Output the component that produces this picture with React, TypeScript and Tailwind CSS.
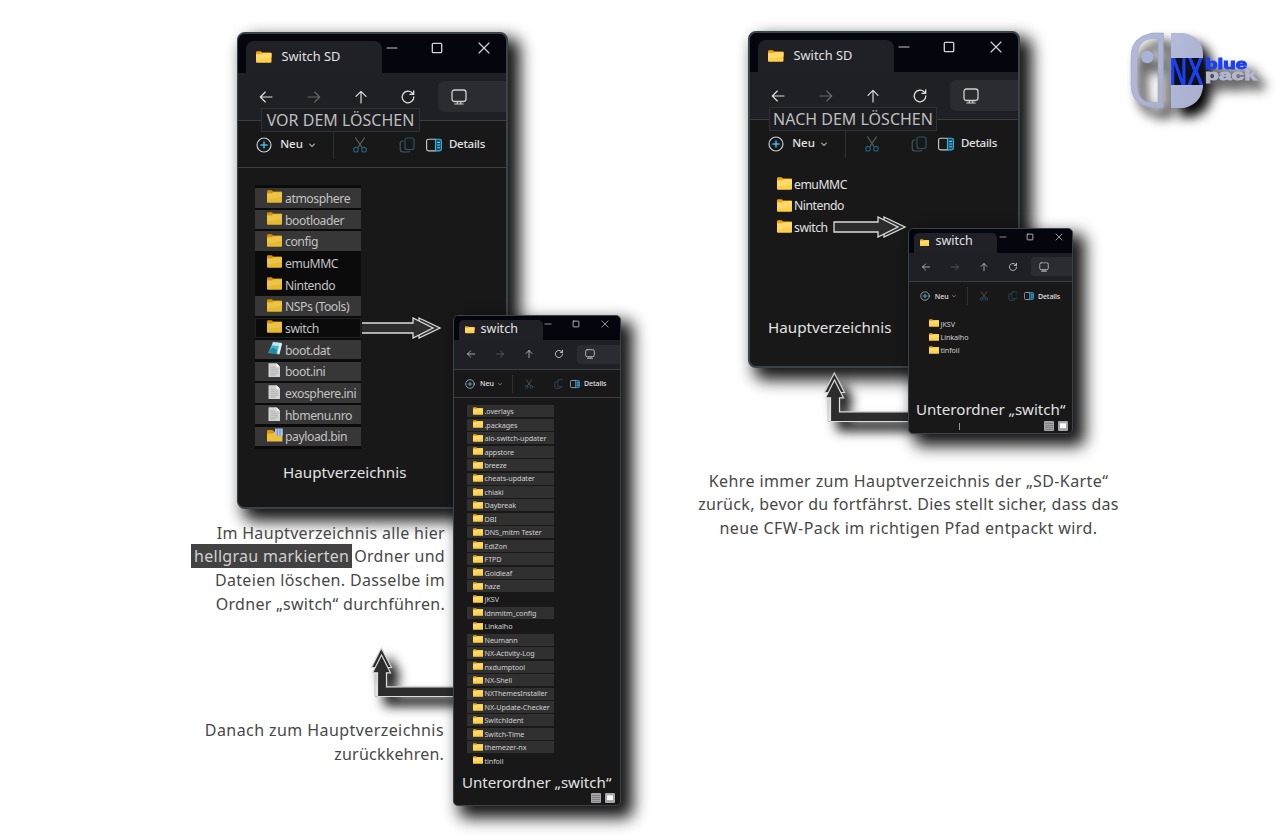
import React from "react";

type Kind = "folder" | "dat" | "doc" | "bin";
type Entry = { name: string; marked?: boolean; kind?: Kind };

const rootEntries: Entry[] = [
  { name: "atmosphere", marked: true },
  { name: "bootloader", marked: true },
  { name: "config", marked: true },
  { name: "emuMMC" },
  { name: "Nintendo" },
  { name: "NSPs (Tools)", marked: true },
  { name: "switch" },
  { name: "boot.dat", marked: true, kind: "dat" },
  { name: "boot.ini", marked: true, kind: "doc" },
  { name: "exosphere.ini", marked: true, kind: "doc" },
  { name: "hbmenu.nro", marked: true, kind: "doc" },
  { name: "payload.bin", marked: true, kind: "bin" },
];

const kept = ["JKSV", "Linkalho", "tinfoil"];
const switchEntries: Entry[] = [
  ".overlays", ".packages", "aio-switch-updater", "appstore", "breeze", "cheats-updater", "chiaki",
  "Daybreak", "DBI", "DNS_mitm Tester", "EdiZon", "FTPD", "Goldleaf", "haze", "JKSV", "ldnmitm_config",
  "Linkalho", "Neumann", "NX-Activity-Log", "nxdumptool", "NX-Shell", "NXThemesInstaller",
  "NX-Update-Checker", "SwitchIdent", "Switch-Time", "themezer-nx", "tinfoil",
].map((name) => ({ name, marked: !kept.includes(name) }));

function Folder({ className, dim }: { className: string; dim?: boolean }) {
  const front = dim ? "#e6b92f" : "#ffcf48";
  const light = dim ? "#eccb5c" : "#ffe08a";
  const back = dim ? "#d98e00" : "#f0a800";
  return (
    <svg viewBox="0 0 16 13" preserveAspectRatio="none" className={className}>
      <path d="M0 1.5Q0 .3 1.2 .3H5L6.4 1.6H15Q16 1.6 16 2.8V6H0Z" fill={back} />
      <path d="M0 3.2H5.2L6.6 2.1H16V12Q16 12.7 15 12.7H1Q0 12.7 0 12Z" fill={front} />
      <path d="M0 3.8H5.4L6.8 2.7H16V7L0 9.5Z" fill={light} opacity=".6" />
    </svg>
  );
}

function FileIcon({ kind }: { kind?: Kind }) {
  if (kind === "dat")
    return (
      <svg viewBox="0 0 16 16" className="mb-[2px] h-4 w-4 shrink-0">
        <path d="M6 1 15 2 12 13 1 12Z" fill="#4fb3c8" />
        <path d="M6 1 15 2 14 5 5 4.5Z" fill="#bfe6ee" />
        <path d="M12.6 2 15 3 12.4 13.5 10 13Z" fill="#e1eef0" />
        <path d="M2.5 9 6.5 6.5 10 9 9.5 12.5 1.5 11.6Z" fill="#1c8ba5" />
      </svg>
    );
  if (kind === "doc")
    return (
      <svg viewBox="0 0 16 16" className="mb-[2px] h-4 w-4 shrink-0">
        <path d="M1.500 1.2H9.500L13 4.700V15H1.500Z" fill="#d2d2d2" />
        <path d="M9.500 1.2V4.700H13Z" fill="#fafafa" />
        <path d="M3.500 5.2H8.500M3.500 7.2H11M3.500 9.2H11M3.500 11.2H11M3.500 13H8.500" stroke="#a2a2a2" strokeWidth=".7" />
      </svg>
    );
  if (kind === "bin")
    return (
      <svg viewBox="0 0 16 16" className="mb-[2px] h-4 w-4 shrink-0">
        <path d="M0 4Q0 3 1 3H5.5L7 4.5H15V8H0Z" fill="#dd9700" />
        <path d="M0 6.5H6L7.5 5.3H15.5V14.5H0Z" fill="#ecc139" />
        <path d="M8 1.5H15.7V8.7H8Z" fill="#a9c8ea" />
        <path d="M10.300 1.5V8.7M13 1.5V8.7" stroke="#7d6fc0" strokeWidth=".8" />
      </svg>
    );
  return <Folder dim className="mb-[2px] h-[13px] w-[15px] shrink-0" />;
}

const icon = "absolute h-[1.6em] w-[1.6em] -translate-x-1/2 -translate-y-1/2 fill-none";

function Glyph({ children, className = "" }: { children: React.ReactNode; className?: string }) {
  return (
    <span className={"relative h-0 w-0 " + className}>
      <svg viewBox="0 0 16 16" className={icon} strokeWidth="1.15" strokeLinecap="round" strokeLinejoin="round">
        {children}
      </svg>
    </span>
  );
}

/* Every measure is in em, so the font size of the frame scales the whole window chrome. */
function Explorer({ className, title, rule, children }: {
  className: string; title: React.ReactNode; rule?: boolean; children?: React.ReactNode;
}) {
  return (
    <section className={"absolute flex flex-col rounded-[.8em] border-[#39444a] bg-[#181818] text-[#e2e2e2] shadow-[9px_9px_16px_3px_rgba(0,0,0,0.92)] " + className}>
      <header className="flex h-[3.9em] shrink-0 rounded-t-[.7em] bg-[#05050d]">
        <div className="ml-[.8em] mt-[.7em] flex w-[13.6em] items-center rounded-t-[.8em] bg-[#202126] pb-[.1em] pl-[1em]">
          <Folder className="h-[1.2em] w-[1.55em] shrink-0" />
          {title}
        </div>
        <div className="flex pt-[1.38em]">
          <Glyph className="ml-[.95em]"><path d="M3 8H13" stroke="#c9c9c9" /></Glyph>
          <Glyph className="ml-[4.5em]"><rect x="3.3" y="3.3" width="9.4" height="9.4" rx="1" stroke="#d5d5d5" strokeWidth="1.3" /></Glyph>
          <Glyph className="ml-[4.7em]"><path d="M3 3 13 13M13 3 3 13" stroke="#d5d5d5" /></Glyph>
        </div>
      </header>
      <nav className="flex h-[4.8em] shrink-0 items-center border-b border-[#3b3d40] bg-[#1f2025]">
        <Glyph className="ml-[2.75em]"><path d="M14 8H2.3M7.3 3 2.3 8 7.3 13" stroke="#dedede" /></Glyph>
        <Glyph className="ml-[4.8em]"><path d="M2 8H13.7M8.7 3 13.7 8 8.7 13" stroke="#65666a" /></Glyph>
        <Glyph className="ml-[4.7em]"><path d="M8 14V2.3M3 7.3 8 2.3 13 7.3" stroke="#dedede" /></Glyph>
        <Glyph className="ml-[4.75em]"><path d="M13.8 8A5.8 5.8 0 1 1 12 3.8L13.5 5.2M13.7 1.8V5.4H10" stroke="#dedede" strokeWidth="1.3" /></Glyph>
        <div className="ml-[3em] flex h-[3.1em] grow items-center rounded-l-[.6em] bg-[#2b2c31]">
          <Glyph className="ml-[2.1em]">
            <rect x="1" y="1" width="14" height="11.5" rx="2.4" stroke="#cfcfcf" strokeWidth="1.3" />
            <path d="M6.3 12.5V14.7M9.7 12.5V14.7M3.8 15H12.2" stroke="#cfcfcf" />
          </Glyph>
        </div>
      </nav>
      <div className={"flex h-[4.7em] shrink-0 items-center border-b pt-[.1em] font-medium " + (rule ? "border-[#3b3d40]" : "border-transparent")}>
        <Glyph className="ml-[2.6em]">
          <circle cx="8" cy="8" r="7" stroke="#c9d0d4" />
          <path d="M8 4.9V11.1M4.9 8H11.1" stroke="#45b5ea" strokeWidth="1.5" />
        </Glyph>
        <div className="ml-[1.62em] w-[2.4em] text-[1em]"><span className="text-[1.15em] leading-none">Neu</span></div>
        <Glyph className="ml-[.82em]"><path d="M5.5 7 8 9.5 10.5 7" stroke="#999" /></Glyph>
        <div className="ml-[2.05em] h-[2.9em] w-px bg-[#2d2f30]" />
        <Glyph className="ml-[2.6em]">
          <path d="M3.5 .8 10.4 11M12.5 .8 5.6 11" stroke="#5e6264" />
          <circle cx="4" cy="12.7" r="2.3" stroke="#235f7c" /><circle cx="12" cy="12.7" r="2.3" stroke="#235f7c" />
        </Glyph>
        <Glyph className="ml-[4.75em]">
          <rect x="6" y="1" width="9" height="11.5" rx="2" stroke="#24566e" />
          <path d="M3.8 4Q1.2 4 1.2 6.5V12Q1.2 15 4 15H8Q10 15 10.8 14" stroke="#505456" />
        </Glyph>
        <Glyph className="ml-[2.65em]">
          <path d="M9.5 2.2H2.5Q.6 2.2 .6 4V12Q.6 13.8 2.5 13.8H9.5" stroke="#c9c9c9" />
          <path d="M9.5 2.2H13.6Q15.4 2.2 15.4 4V12Q15.4 13.8 13.6 13.8H9.5Z" fill="#124c67" stroke="#42aee2" />
          <path d="M11.5 5.3H13.5M11.5 8H13.5M11.5 10.7H13.5" stroke="#6bd0fa" />
        </Glyph>
        <div className="ml-[1.5em] text-[1em]"><span className="text-[1.15em] leading-none tracking-[-.02em]">Details</span></div>
      </div>
      {children}
    </section>
  );
}

function SmallRow({ name, marked }: Entry) {
  return (
    <li className="flex h-[13.44px] w-[87px] items-start">
      <div className={"flex h-[12px] w-full items-center pl-[6px] " + (marked ? "bg-[#303030]" : "")}>
        <Folder className="mb-px h-[8px] w-[10px] shrink-0" />
        <span className="ml-[1.5px] whitespace-nowrap pt-px text-[7.2px] leading-none tracking-[-.01em] text-[#d2d2d2]">{name}</span>
      </div>
    </li>
  );
}

function ViewButtons() {
  return (
    <div className="flex gap-[4px]">
      <svg viewBox="0 0 10 10" className="h-[10px] w-[10px]"><rect width="10" height="10" rx="1" fill="#a5a5a8" /><path d="M1 2.5H9M1 4.5H9M1 6.5H9M1 8.5H9" stroke="#707074" strokeWidth=".7" /></svg>
      <svg viewBox="0 0 10 10" className="h-[10px] w-[10px]"><rect width="10" height="10" rx="1" fill="#a5a5a8" /><rect x="2" y="2.3" width="6" height="4.8" fill="#fff" /></svg>
    </div>
  );
}

function ElbowArrow({ className }: { className: string }) {
  return (
    <svg viewBox="0 0 90 52" className={"absolute h-[52px] w-[90px] overflow-visible drop-shadow-[8px_9px_6px_rgba(0,0,0,0.95)] " + className}>
      <path d="M12.300 1 22.500 20.500H2.500Z" fill="#2c2c2c" stroke="#d4d4d4" strokeWidth="1.2" />
      <path d="M12.500 8 21.500 25.800H17.500V39.800H92V49.500H8.500V25.800H3.500Z" fill="#2c2c2c" stroke="#dedede" strokeWidth="1.2" />
      <path d="M6 27V49.500H9" fill="none" stroke="#bdbdbd" strokeWidth=".9" />
    </svg>
  );
}

function Logo() {
  return (
    <svg viewBox="0 0 135 90" className="absolute left-[1125px] top-[28px] h-[90px] w-[135px] overflow-visible drop-shadow-[8px_9px_6px_rgba(0,0,0,1)]">
      <defs>
        <linearGradient id="shell" x1="0" x2="1" y2="1"><stop stopColor="#b3bbdc" /><stop offset="1" stopColor="#aaaecb" /></linearGradient>
      </defs>
      <path fillRule="evenodd" d="M27 5H38.500V80H27Q6 76 6 57V28Q6 9 27 5ZM27 10.500Q12.500 12 12.500 28V57Q12.500 74 27 74.500H33V10.500Z" fill="url(#shell)" stroke="#979dba" strokeWidth=".5" />
      <circle cx="22.300" cy="29" r="6.200" fill="#a9b3d8" />
      <path d="M46 5H59Q78 9 78 27V30H46ZM46 57H78V59Q76 76 59 80H46Z" fill="url(#shell)" />
      <path d="M47 30H78V57H47Z" fill="#101018" />
      <text x="44.500" y="57" textLength="34" lengthAdjust="spacingAndGlyphs" fill="#1a3ff0" className="font-['Liberation_Sans'] text-[38px] font-bold">NX</text>
      <text x="80" y="40.500" textLength="42" lengthAdjust="spacingAndGlyphs" fill="#1a3ff5" stroke="#1a3ff5" strokeWidth=".9" className="font-['Liberation_Sans'] text-[14px] font-bold">blue</text>
      <text x="80" y="52" textLength="52" lengthAdjust="spacingAndGlyphs" fill="#b2b7d0" stroke="#b2b7d0" strokeWidth=".8" className="font-['Liberation_Sans'] text-[14px] font-bold">pack</text>
    </svg>
  );
}

function DoubleArrow({ className, open }: { className: string; open?: boolean }) {
  return (
    <svg viewBox="0 0 80 22" className={"absolute h-[22px] w-[80px] " + className}>
      <path d="M57 1 78 11 57 21V16.500L66 11 57 5.500Z" fill="#2c2c2c" stroke="#dcdcdc" strokeWidth="1.3" />
      {open ? (
        <path d="M0 6H51V1L71 11 51 21V16H0" fill="#2c2c2c" stroke="#dcdcdc" strokeWidth="1.3" />
      ) : (
        <path d="M7 6H51V1L71 11 51 21V16H7Z" fill="#2c2c2c" stroke="#dcdcdc" strokeWidth="1.3" />
      )}
    </svg>
  );
}

const bigTitle = <span className="ml-[10px] whitespace-nowrap text-[12.8px] leading-none">Switch SD</span>;
const smallTitle = <span className="mb-[2px] ml-[6px] whitespace-nowrap text-[12.5px] leading-none">switch</span>;

export default function App() {
  return (
    <main className="relative h-[835px] w-[1280px] overflow-hidden bg-white font-['Noto_Sans','Open_Sans',sans-serif]">
      <Explorer className="left-[237px] top-[32px] h-[477px] w-[271px] border-2 border-l text-[10px]" title={bigTitle} rule>
        <ul className="ml-[17px] mt-[17px] flex w-[106px] flex-col bg-[#0b0b0b] pb-px pt-[3px]">
          {rootEntries.map((e) => (
            <li key={e.name} className="flex h-[21.7px] items-start">
              <div className={"flex h-[19.5px] w-full items-center " + (e.marked ? "bg-[#373737] pl-[12px]" : e.name === "switch" ? "border border-[#202020] pl-[11px]" : "pl-[12px]")}>
                <FileIcon kind={e.kind} />
                <span className={(!e.kind || e.kind === "folder" ? "ml-[3px]" : "ml-[2px]") + " whitespace-nowrap pt-[2.5px] text-[12.2px] leading-none tracking-[-.43px] text-[#c3c3c3]"}>{e.name}</span>
              </div>
            </li>
          ))}
        </ul>
        <div className="ml-[45px] mt-[12px] text-[15.2px]">Hauptverzeichnis</div>
      </Explorer>
      <div className="absolute left-[261px] top-[108px] flex h-[24px] w-[159px] items-center justify-center whitespace-nowrap border border-[#303135] bg-[#1c1d20] text-[16px] text-[#bfbfbf]">VOR DEM LÖSCHEN</div>
      <DoubleArrow open className="left-[362px] top-[317px]" />

      <p className="absolute right-[835px] top-[521.5px] flex w-[280px] flex-col text-right text-[16px] leading-[23.7px] text-[#484848]">
        <span className="tracking-[.33px]">Im Hauptverzeichnis alle hier</span>
        <span className="tracking-[.28px]"><mark className="mr-[2px] bg-[#424242] px-[3px] py-px text-[#d0d0d0]">hellgrau markierten</mark>Ordner und</span>
        <span className="tracking-[.35px]">Dateien löschen. Dasselbe im</span>
        <span className="tracking-[.3px]">Ordner „switch“ durchführen.</span>
      </p>
      <ElbowArrow className="left-[369px] top-[647px]" />
      <p className="absolute right-[836px] top-[719px] flex w-[280px] flex-col text-right text-[16px] leading-[23.7px] text-[#484848]">
        <span className="tracking-[.42px]">Danach zum Hauptverzeichnis</span>
        <span className="tracking-[.2px]">zurückkehren.</span>
      </p>

      <Explorer className="left-[453px] top-[315px] h-[491px] w-[168px] border text-[6.15px]" title={smallTitle} rule>
        <ul className="ml-[13px] mt-[7px] flex flex-col">
          {switchEntries.map((e) => <SmallRow key={e.name} {...e} />)}
        </ul>
        <div className="ml-[8px] mt-[2px] whitespace-nowrap text-[15.1px] leading-[24px]">Unterordner „switch“</div>
        <div className="mt-[-1px] flex justify-end pr-[5px]"><ViewButtons /></div>
      </Explorer>

      <Explorer className="left-[748px] top-[31px] h-[337px] w-[272px] border-2 text-[10px]" title={bigTitle}>
        <ul className="ml-[27px] mt-[7px] flex flex-col">
          {["emuMMC", "Nintendo", "switch"].map((name) => (
            <li key={name} className="flex h-[21.5px] items-center">
              <Folder className="mb-[2px] h-[13px] w-[15px] shrink-0" />
              <span className="ml-[2px] text-[12.2px] leading-none tracking-[-.45px]">{name}</span>
            </li>
          ))}
        </ul>
        <div className="ml-[18px] mt-[77px] text-[15.2px]">Hauptverzeichnis</div>
      </Explorer>
      <div className="absolute left-[769px] top-[107px] flex h-[24px] w-[168px] items-center justify-center whitespace-nowrap border border-[#303135] bg-[#1c1d20] text-[16px] text-[#bfbfbf]">NACH DEM LÖSCHEN</div>
      <DoubleArrow className="left-[827px] top-[216px]" />
      <ElbowArrow className="left-[822px] top-[372px]" />

      <Explorer className="left-[908px] top-[228px] h-[206px] w-[165px] border text-[6.1px]" title={smallTitle}>
        <ul className="ml-[14px] mt-[7px] flex flex-col">
          {kept.map((name) => <SmallRow key={name} name={name} />)}
        </ul>
        <div className="ml-[7px] mt-[39px] whitespace-nowrap text-[15.1px] leading-[24px]">Unterordner „switch“</div>
        <div className="flex items-center justify-end pr-[4px]">
          <div className="mr-[84px] h-[7px] w-px bg-[#999]" />
          <ViewButtons />
        </div>
      </Explorer>

      <p className="absolute left-[688.5px] top-[469.5px] flex w-[440px] flex-col text-center text-[16px] leading-[23.7px] text-[#484848]">
        <span className="tracking-[.4px]">Kehre immer zum Hauptverzeichnis der „SD-Karte“</span>
        <span className="tracking-[.31px]">zurück, bevor du fortfährst. Dies stellt sicher, dass das</span>
        <span className="tracking-[.42px]">neue CFW-Pack im richtigen Pfad entpackt wird.</span>
      </p>
      <Logo />
    </main>
  );
}
